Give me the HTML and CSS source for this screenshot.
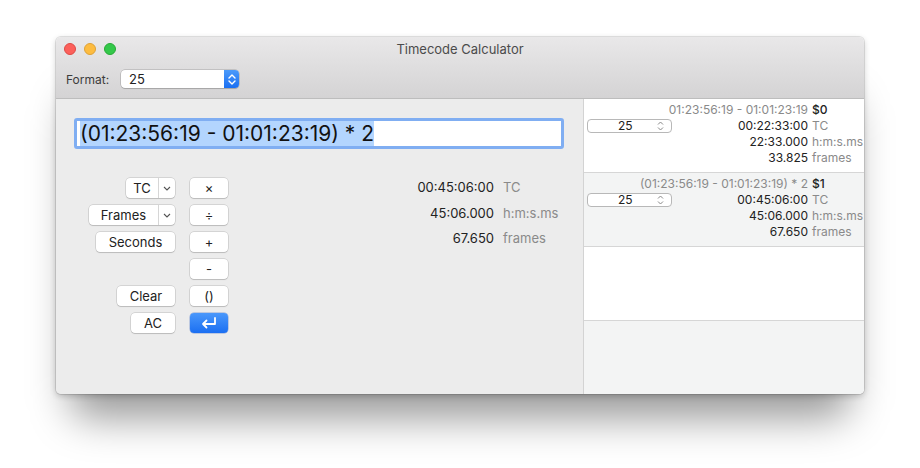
FILE: index.html
```html
<!DOCTYPE html>
<html lang="en">
<head>
  <meta charset="UTF-8">
  <title>Timecode Calculator</title>
  <link rel="stylesheet" href="styles.css">
</head>
<body>
  <div class="frame">
  <div class="window">
    <div class="titlebar">
      <div class="titlerow">
        <div class="lights">
          <span class="light red"></span>
          <span class="light yellow"></span>
          <span class="light green"></span>
        </div>
        <div class="title">Timecode Calculator</div>
        <div class="spacer"></div>
      </div>
      <div class="toolbar">
        <span class="label">Format:</span>
        <div class="popup">
          <span class="popup-text">25</span>
          <span class="popup-arrows">
            <svg width="8" height="11" viewBox="0 0 8 11"><path d="M1 4 L4 1 L7 4 M1 7 L4 10 L7 7" fill="none" stroke="#fff" stroke-width="1.4" stroke-linecap="round" stroke-linejoin="round"/></svg>
          </span>
        </div>
      </div>
    </div>

    <div class="content">
      <div class="calc">
        <div class="field"><span class="sel">(01:23:56:19 - 01:01:23:19) * 2</span></div>

        <div class="pad">
          <div class="keys">
            <div class="btn split w-tc"><span class="split-label">TC</span><span class="split-arrow"><svg width="8" height="5" viewBox="0 0 8 5"><path d="M1 1 L4 4 L7 1" fill="none" stroke="#555" stroke-width="1.1"/></svg></span></div>
            <div class="btn op">×</div>

            <div class="btn split w-frames"><span class="split-label">Frames</span><span class="split-arrow"><svg width="8" height="5" viewBox="0 0 8 5"><path d="M1 1 L4 4 L7 1" fill="none" stroke="#555" stroke-width="1.1"/></svg></span></div>
            <div class="btn op">÷</div>

            <div class="btn w-seconds">Seconds</div>
            <div class="btn op">+</div>

            <div></div>
            <div class="btn op">-</div>

            <div class="btn w-clear">Clear</div>
            <div class="btn op">()</div>

            <div class="btn w-ac">AC</div>
            <div class="btn op enter">
              <svg width="18" height="12" viewBox="0 0 18 12"><path d="M15 1 V7 H3 M6.5 3.5 L3 7 L6.5 10.5" fill="none" stroke="#fff" stroke-width="1.8" stroke-linecap="round" stroke-linejoin="round"/></svg>
            </div>
          </div>

          <div class="results">
            <span class="val">00:45:06:00</span><span class="unit">TC</span>
            <span class="val">45:06.000</span><span class="unit">h:m:s.ms</span>
            <span class="val">67.650</span><span class="unit">frames</span>
          </div>
        </div>
      </div>

      <div class="history">
        <div class="entry">
          <span class="expr">01:23:56:19 - 01:01:23:19</span><span class="var">$0</span>
          <div class="mini-popup"><span>25</span><svg width="7" height="10" viewBox="0 0 7 10"><path d="M1 3.5 L3.5 1 L6 3.5 M1 6.5 L3.5 9 L6 6.5" fill="none" stroke="#888" stroke-width="1"/></svg></div>
          <span class="hval">00:22:33:00</span><span class="hunit">TC</span>
          <span class="hval">22:33.000</span><span class="hunit">h:m:s.ms</span>
          <span class="hval">33.825</span><span class="hunit">frames</span>
        </div>
        <div class="entry alt">
          <span class="expr">(01:23:56:19 - 01:01:23:19) * 2</span><span class="var">$1</span>
          <div class="mini-popup"><span>25</span><svg width="7" height="10" viewBox="0 0 7 10"><path d="M1 3.5 L3.5 1 L6 3.5 M1 6.5 L3.5 9 L6 6.5" fill="none" stroke="#888" stroke-width="1"/></svg></div>
          <span class="hval">00:45:06:00</span><span class="hunit">TC</span>
          <span class="hval">45:06.000</span><span class="hunit">h:m:s.ms</span>
          <span class="hval">67.650</span><span class="hunit">frames</span>
        </div>
        <div class="entry"></div>
        <div class="entry alt last"></div>
      </div>
    </div>
  </div>
  </div>
</body>
</html>
```

FILE: styles.css
```css
html, body {
  height: 468px;
}

body {
  margin: 0;
  padding-top: 37px;
  box-sizing: border-box;
  overflow: hidden;
  background: #fff;
  font-family: Inter, "Noto Sans", sans-serif;
  color: #222;
}

.frame {
  position: relative;
  width: 808px;
  margin-left: 56px;
}

/* soft window shadow */
.frame::before {
  content: "";
  position: absolute;
  left: 14px;
  right: 14px;
  top: 60px;
  bottom: -24px;
  background: rgba(0, 0, 0, 0.4);
  filter: blur(20px);
  border-radius: 20px;
}

.window {
  position: relative;
  border-radius: 5px;
  overflow: hidden;
  box-shadow: 0 0 0 1px rgba(0, 0, 0, 0.1), 0 2px 6px rgba(0, 0, 0, 0.2);
}

.titlebar {
  height: 61px;
  background: linear-gradient(to bottom, #e9e8e9, #d4d3d4);
  border-bottom: 1px solid #bdbdbd;
}

.titlerow {
  display: flex;
  align-items: center;
  height: 23px;
}

.lights {
  width: 60px;
  display: flex;
  gap: 8px;
  padding-left: 8px;
  box-sizing: border-box;
}

.light {
  width: 12px;
  height: 12px;
  border-radius: 50%;
  box-sizing: border-box;
}

.red { background: #fc605b; border: 0.5px solid #de4a45; }
.yellow { background: #fdbc40; border: 0.5px solid #dea236; }
.green { background: #34c84a; border: 0.5px solid #27aa35; }

.title {
  flex: 1;
  text-align: center;
  font-size: 13px;
  color: #4b4b4b;
}

.spacer {
  width: 60px;
}

.toolbar {
  display: flex;
  align-items: center;
  height: 38px;
  padding-left: 10px;
}

.label {
  font-size: 12px;
  color: #3c3c3c;
  width: 55px;
}

.popup {
  width: 118px;
  height: 18px;
  display: flex;
  background: #fff;
  border-radius: 4px;
  box-shadow: 0 0 0 0.5px rgba(0, 0, 0, 0.25), 0 1px 1px rgba(0, 0, 0, 0.12);
  overflow: hidden;
}

.popup-text {
  flex: 1;
  font-size: 13px;
  line-height: 18px;
  padding-left: 8px;
}

.popup-arrows {
  width: 15px;
  background: linear-gradient(to bottom, #4b9afa, #1a6ff2);
  display: flex;
  align-items: center;
  justify-content: center;
}

.content {
  display: flex;
  height: 295px;
}

.calc {
  width: 528px;
  box-sizing: border-box;
  background: #ececec;
  border-right: 1px solid #d3d3d3;
  padding: 19px 19px 0 18px;
}

.field {
  height: 31px;
  box-sizing: border-box;
  background: #fff;
  border: 3px solid #80aef2;
  border-radius: 3px;
  padding: 1px 0 0 3px;
  font-size: 21px;
  line-height: 24px;
  color: #111;
}

.sel {
  background: #b3d5fe;
}

.pad {
  display: flex;
  margin-top: 29px;
}

.keys {
  display: grid;
  grid-template-columns: 101px 38px;
  grid-auto-rows: 20px;
  column-gap: 15px;
  row-gap: 7px;
  justify-items: end;
}

.btn {
  height: 20px;
  box-sizing: border-box;
  background: #fff;
  border-radius: 4px;
  box-shadow: 0 0 0 0.5px rgba(0, 0, 0, 0.2), 0 1px 1px rgba(0, 0, 0, 0.12);
  font-size: 13px;
  line-height: 20px;
  text-align: center;
  color: #222;
}

.op {
  width: 38px;
}

.w-tc { width: 49px; }
.w-frames { width: 86px; }
.w-seconds { width: 79px; }
.w-clear { width: 58px; }
.w-ac { width: 44px; }

.split {
  display: flex;
}

.split-label {
  flex: 1;
}

.split-arrow {
  width: 16px;
  border-left: 1px solid #d6d6d6;
  display: flex;
  align-items: center;
  justify-content: center;
}

.enter {
  background: linear-gradient(to bottom, #4a98fb, #1b6ff2);
  display: flex;
  align-items: center;
  justify-content: center;
  box-shadow: 0 0 0 0.5px rgba(0, 60, 180, 0.4);
}

.results {
  display: grid;
  grid-template-columns: 266px auto;
  column-gap: 9px;
  align-content: start;
  margin-top: -3px;
  font-size: 13px;
  line-height: 25.5px;
}

.val {
  text-align: right;
  color: #222;
}

.unit {
  color: #8a8a8a;
}

.history {
  width: 280px;
  background: #fff;
}

.entry {
  height: 70px;
  border-bottom: 1px solid #d6d6d6;
  display: grid;
  grid-template-columns: 85px 1fr 50px;
  grid-auto-rows: 16px;
  column-gap: 4px;
  padding: 3px 2px 0 3px;
  font-size: 12px;
  line-height: 16px;
  align-content: start;
}

.entry.alt {
  background: #f3f4f4;
}

.entry.last {
  border-bottom: none;
  height: 80px;
}

.expr {
  grid-column: 1 / 3;
  text-align: right;
  color: #8a8a8a;
  white-space: nowrap;
}

.var {
  color: #222;
  font-weight: 500;
}

.mini-popup {
  grid-column: 1;
  height: 14px;
  margin-top: 1px;
  box-sizing: border-box;
  border: 1px solid #b8b8b8;
  border-radius: 4px;
  background: #fff;
  display: flex;
  align-items: center;
  justify-content: space-between;
  padding: 0 7px 0 30px;
  font-size: 12px;
  line-height: 12px;
}

.hval {
  grid-column: 2;
  text-align: right;
  color: #222;
}

.hunit {
  color: #8a8a8a;
}
```
